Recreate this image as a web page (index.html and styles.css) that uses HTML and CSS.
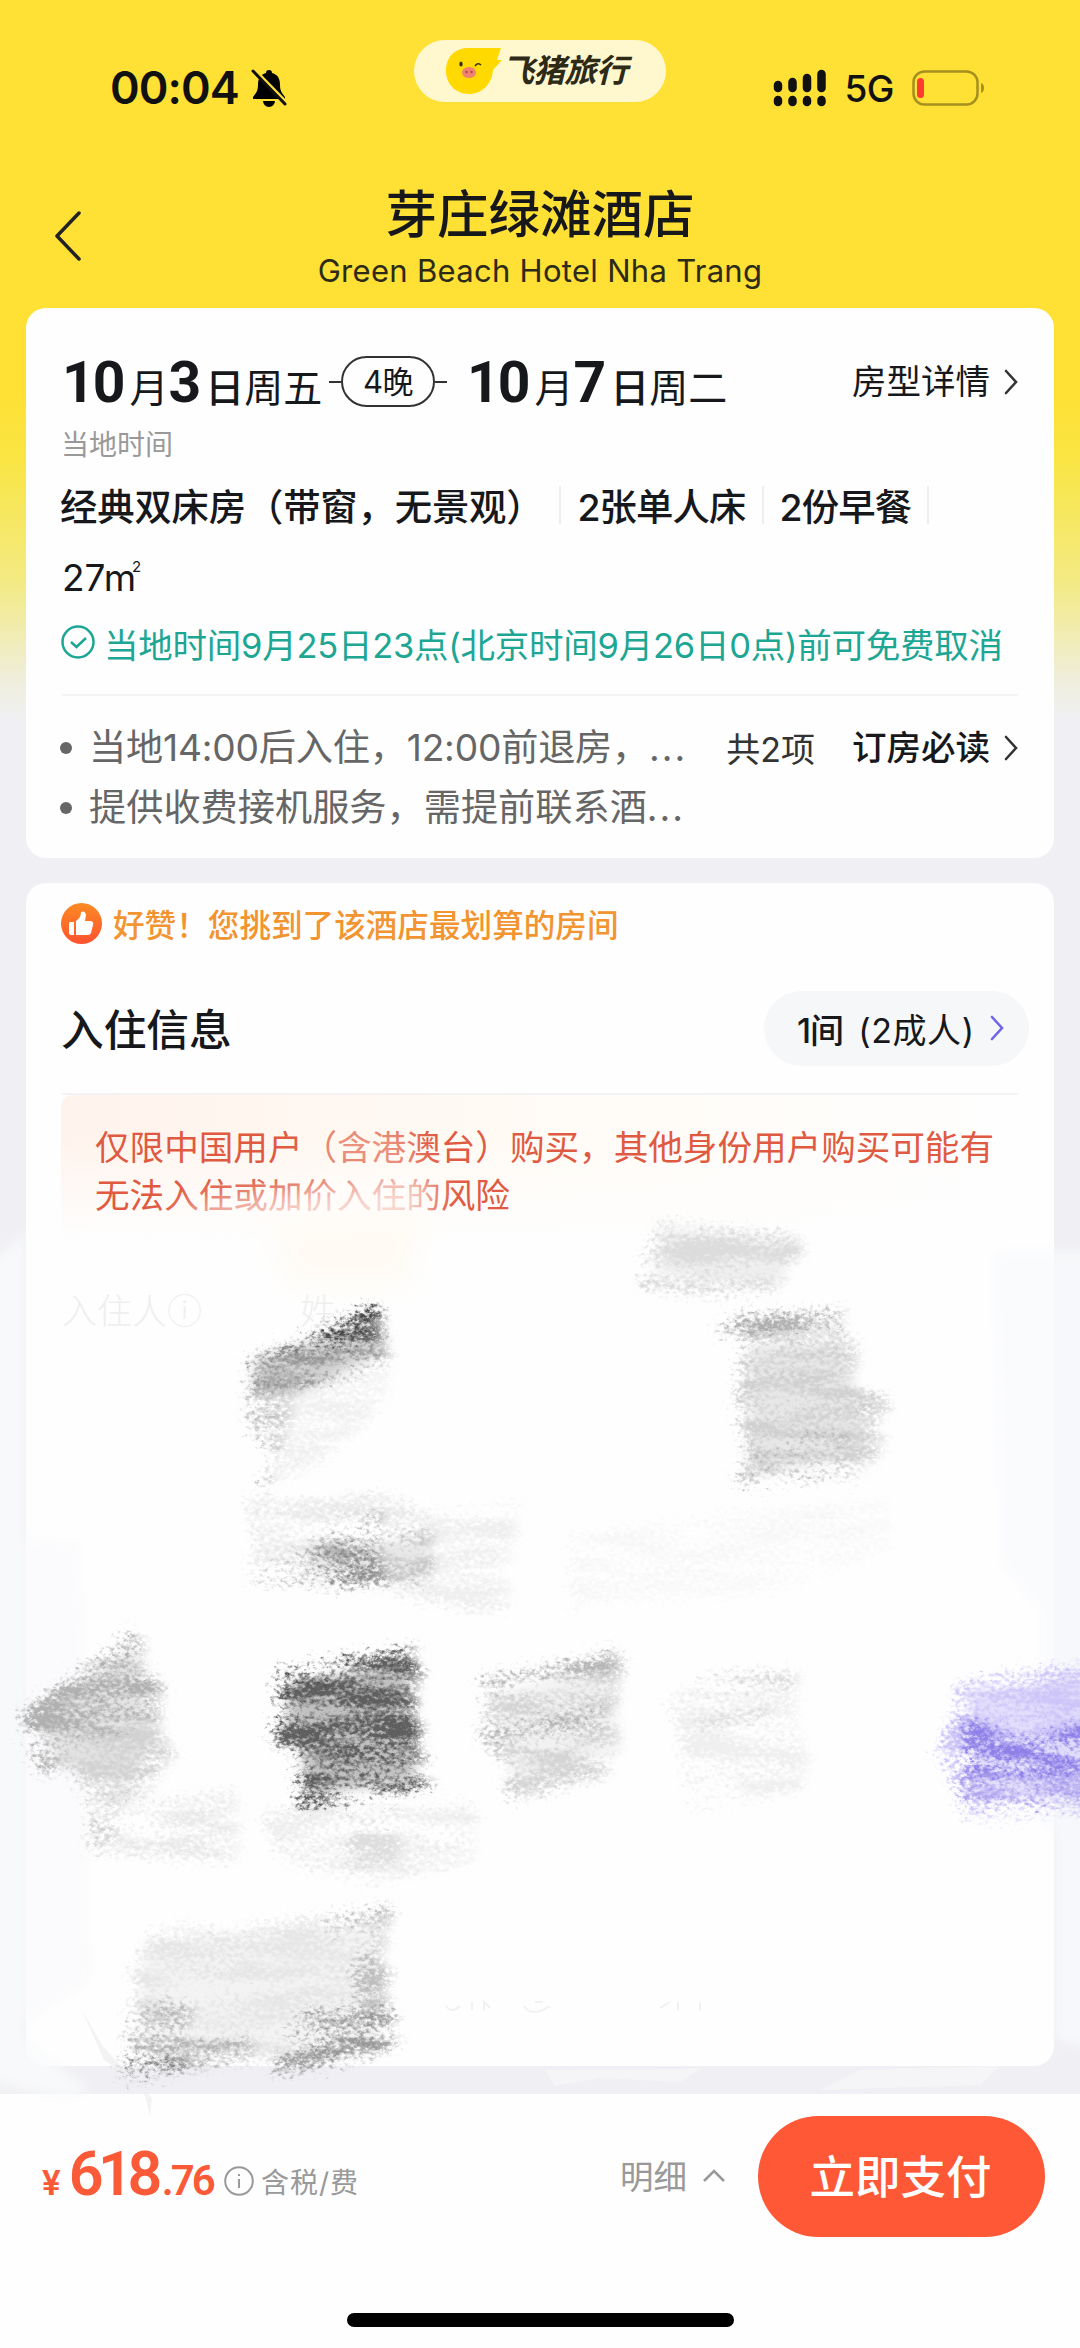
FILE: index.html
```html
<!DOCTYPE html>
<html lang="zh-CN">
<head>
    <meta charset="UTF-8">
    <meta name="viewport" content="width=device-width, initial-scale=1.0">
    <title>芽庄绿滩酒店 - 飞猪旅行</title>
    <link rel="stylesheet" href="styles.css">
</head>

<body>
    <div class="status-bar">
        <div class="status-left">
            <span class="time">00:04</span>
            <svg class="bell" viewBox="0 0 36 38">
                <path d="M18 1c-2 0-3 1.200-3 3-6 1.500-8 6-8 12 0 7-3 9-5 12v2h32v-2c-2-3-5-5-5-12 0-6-2-10.500-8-12 0-1.800-1-3-3-3zM12 32a6 6 0 0 0 12 0z" />
                <path d="M2 -1l34 35" stroke="#ffe034" stroke-width="3" />
                <path d="M2 2l32 33" stroke="#111" stroke-width="3" stroke-linecap="round" />
            </svg>
        </div>
        <div class="brand">
            <svg class="pig" viewBox="0 0 56 46">
                <path d="M22 0H55L51 12L56 12L47 22C46 36 36 46 23 46C9 46 0 35 0 23C0 9 9 0 22 0Z" fill="#ffd900" />
                <ellipse cx="23" cy="24.500" rx="7" ry="5.500" fill="#f08272" />
                <circle cx="20.500" cy="24" r="1.200" fill="#a94e4c" />
                <circle cx="25.500" cy="24" r="1.200" fill="#a94e4c" />
                <ellipse cx="15" cy="16" rx="1.700" ry="2.500" fill="#33301a" />
                <path d="M29 18q3-4 6-1" fill="none" stroke="#33301a" stroke-width="1.500" />
            </svg>
            <span>飞猪旅行</span>
        </div>
        <div class="status-right">
            <svg class="signal" viewBox="0 0 54 38">
                <g stroke="#111" stroke-width="8.500" stroke-linecap="round">
                    <path d="M5 16v3M19.500 13v6M34 9v10M48.500 5v14M5 31v2M19.500 31v2M34 31v2M48.500 31v2" />
                </g>
            </svg>
            <span class="network">5G</span>
            <svg class="battery" viewBox="0 0 74 36">
                <rect x="1.500" y="1.500" width="64" height="33" rx="11" fill="none" stroke="#a58f20" stroke-width="2.500" />
                <path d="M69 13c4 1 4 9 0 10z" fill="#a58f20" />
                <rect x="5" y="8" width="7" height="20" rx="3.500" fill="#ff3b30" />
            </svg>
        </div>
    </div>

    <div class="title-bar">
        <svg class="back" viewBox="0 0 28 52"><path d="M25 3L3 26L25 49" /></svg>
        <h1>芽庄绿滩酒店</h1>
        <p>Green Beach Hotel Nha Trang</p>
    </div>

    <div class="card room-card">
        <div class="dates">
            <div class="date"><b>10</b>月<b>3</b><em>日</em>周五</div>
            <span class="nights">4晚</span>
            <div class="date"><b>10</b>月<b>7</b><em>日</em>周二</div>
            <a class="more">房型详情<svg class="arrow" viewBox="0 0 14 26"><path d="M2 2L12 13L2 24" /></svg></a>
        </div>
        <div class="local">当地时间</div>
        <div class="room">
            <span>经典双床房（带窗，无景观）</span><i></i><span>2张单人床</span><i></i><span>2份早餐</span><i></i>
        </div>
        <div class="area">27m<sup>2</sup></div>
        <div class="cancel">
            <svg viewBox="0 0 34 34"><circle cx="17" cy="17" r="15.500" /><path d="M10 17l5.500 5L25 13" /></svg>
            <span>当地时间9月25日23点(北京时间9月26日0点)前可免费取消</span>
        </div>
        <div class="notes">
            <ul>
                <li>当地14:00后入住，12:00前退房，<span class="dots">...</span></li>
                <li>提供收费接机服务，需提前联系酒<span class="dots">...</span></li>
            </ul>
            <div class="read">
                <span>共2项</span>
                <a class="more">订房必读<svg class="arrow" viewBox="0 0 14 26"><path d="M2 2L12 13L2 24" /></svg></a>
            </div>
        </div>
    </div>

    <div class="card guest-card">
        <div class="praise">
            <svg viewBox="0 0 41 41">
                <defs>
                    <linearGradient id="thumb" x1="0" y1="0" x2="0" y2="1">
                        <stop offset="0" stop-color="#fb8b22" />
                        <stop offset="1" stop-color="#ff5230" />
                    </linearGradient>
                </defs>
                <circle cx="20.500" cy="20.500" r="20.500" fill="url(#thumb)" />
                <path d="M9 19h4v13h-3q-2 0-2-2v-9q0-2 1-2zM15 18q5-3 5-9 4-2 5 3l-1 6h6q3 1 2 4l-2 8q-1 2-3 2H15z" fill="#fff" />
            </svg>
            <span>好赞！您挑到了该酒店最划算的房间</span>
        </div>
        <div class="guest-head">
            <h2>入住信息</h2>
            <div class="rooms"><b>1间</b><span>(2成人)</span><svg class="arrow" viewBox="0 0 14 26"><path d="M2 2L12 13L2 24" /></svg></div>
        </div>
        <div class="warning">仅限中国用户（含港澳台）购买，其他身份用户购买可能有无法入住或加价入住的风险</div>
        <div class="guest-row"><span>入住人ⓘ</span><span>姓</span></div>
    </div>

    <!-- hand drawn strokes over the form -->
    <svg class="scribbles" viewBox="0 1090 1080 1030">
        <defs>
            <filter id="chalk" x="-10%" y="-10%" width="120%" height="120%">
                <feTurbulence type="fractalNoise" baseFrequency="0.2 0.26" numOctaves="4" seed="7" result="noise" />
                <feTurbulence type="fractalNoise" baseFrequency="0.012 0.05" numOctaves="2" seed="21" result="bands" />
                <feComposite in="noise" in2="bands" operator="arithmetic" k1="0" k2="0.6" k3="0.6" k4="0" result="mixed" />
                <feColorMatrix in="mixed" values="0 0 0 0 0  0 0 0 0 0  0 0 0 0 0  4.500 0 0 0 -1.750" result="grain" />
                <feGaussianBlur in="SourceGraphic" stdDeviation="4" result="smudge" />
                <feDisplacementMap in="smudge" in2="noise" scale="34" xChannelSelector="R" yChannelSelector="G" result="rough" />
                <feComposite in="rough" in2="grain" operator="in" result="strokes" />
                <feGaussianBlur in="strokes" stdDeviation="0.6" />
            </filter>
            <filter id="soft" x="-30%" y="-30%" width="160%" height="160%"><feGaussianBlur stdDeviation="14" /></filter>
            <filter id="edge"><feGaussianBlur stdDeviation="6" /></filter>
        </defs>

        <!-- erased areas -->
        <g filter="url(#soft)">
            <path d="M190 1206L400 1176L440 1180L425 1222L170 1226Z" fill="#fffdfb" opacity=".8" />
            <path d="M330 1120L410 1130L420 1165L300 1165Z" fill="#fff9f0" opacity=".4" />
            <path d="M270 1225L420 1215L410 1285L290 1285Z" fill="#fff8ec" opacity=".6" />
        </g>
        <g filter="url(#edge)" fill="#f9fafc">
            <path d="M-20 1270L26 1232V2040L90 2090L70 2100L-20 2080Z" opacity=".85" />
            <path d="M995 1252H1100V2050L1054 2040V1830L1040 1820V1610L1000 1560Z" opacity=".8" />
            <path d="M26 1540L80 1545L90 1980L26 2020Z" opacity=".7" />
        </g>
        <path d="M545 2070L700 2069L680 2082L600 2078L555 2086ZM820 2090L860 2070L1000 2066L980 2085Z" fill="#f8f8f9" opacity=".6" />

        <!-- pale smudge under the strokes -->
        <g filter="url(#edge)" opacity=".45">
            <path d="M255 1362L380 1318L385 1350L300 1395L255 1390Z" fill="#999" />
            <path d="M750 1345L845 1343L870 1455L750 1475Z" fill="#ccc" />
            <path d="M665 1230L795 1242L780 1285L655 1275Z" fill="#ddd" />
            <path d="M310 1545L430 1540L430 1578L310 1572Z" fill="#ccc" />
            <path d="M35 1715L135 1645L155 1740L130 1785L60 1765Z" fill="#c4c4c4" />
            <path d="M290 1685L408 1662L415 1780L305 1795L305 1745L285 1740Z" fill="#777" />
            <path d="M490 1695L610 1665L620 1750L515 1785Z" fill="#e2e2e2" />
            <path d="M970 1695L1090 1680V1795L975 1800Z" fill="#c2b8f8" />
            <path d="M145 1945L380 1925L380 2045L140 2060Z" fill="#e6e6e6" />
        </g>

        <g filter="url(#chalk)">
            <path d="M245 1366L374 1307L382 1316L377 1335L384 1345L320 1356L254 1368Z" fill="#444" />
            <path d="M250 1363L300 1348L388 1342L390 1364L320 1388L255 1390Z" fill="#999" />
            <path d="M248 1394L300 1382L325 1388L300 1420L298 1450L274 1452L252 1428Z" fill="#c4c4c4" />
            <path d="M300 1390L386 1362L392 1390L350 1440L290 1484L270 1492L263 1478L285 1450Z" fill="#f0f0f0" />
            <path d="M262 1478L276 1476L277 1490L267 1492Z" fill="#aaa" />

            <path d="M245 1498L380 1495L444 1515L436 1583L250 1576L258 1540Z" fill="#e9e9e9" />
            <path d="M300 1560L345 1523L386 1515L388 1581L347 1585L312 1580L250 1578Z" fill="#b5b5b5" />
            <path d="M318 1556L386 1541L386 1578L345 1583L318 1575Z" fill="#8e8e8e" />
            <path d="M388 1535L434 1530L436 1583L388 1581Z" fill="#c6c6c6" />
            <path d="M436 1512L522 1506L510 1575L513 1605L475 1611L380 1590L440 1580Z" fill="#efefef" />

            <path d="M662 1222L803 1236L802 1262L775 1292L700 1292L640 1286L648 1250Z" fill="#dcdcdc" />
            <path d="M742 1317L845 1312L846 1321L790 1330L738 1336L716 1332Z" fill="#aaa" />
            <path d="M745 1335L840 1333L862 1350L858 1386L890 1400L880 1460L742 1484L748 1450L738 1400Z" fill="#d0d0d0" />
            <path d="M750 1447L855 1436L850 1444L750 1456ZM738 1476L850 1464L868 1470L742 1485Z" fill="#adadad" />
            <path d="M572 1537L705 1520L890 1500L892 1546L770 1590L572 1605Z" fill="#f7f7f7" />

            <path d="M22 1714L138 1630L147 1645L145 1670L160 1680L165 1735L115 1752L75 1754L45 1776L30 1740Z" fill="#b0b0b0" />
            <path d="M70 1745L160 1716L176 1754L150 1790L120 1803L85 1800Z" fill="#d2d2d2" />
            <path d="M95 1812L238 1790L240 1862L92 1852L105 1830Z" fill="#e9e9e9" />
            <path d="M92 1812L125 1805L120 1840L92 1852Z" fill="#d0d0d0" />
            <path d="M262 1812L480 1806L476 1860L375 1882L282 1860Z" fill="#ededed" />
            <path d="M350 1815L402 1815L402 1860L350 1866Z" fill="#dedede" />

            <path d="M278 1680L360 1660L417 1648L420 1685L422 1738L425 1770L434 1774L428 1783L400 1794L298 1808L302 1788L297 1745L275 1744L282 1700Z" fill="#5e5e5e" />
            <path d="M278 1674L360 1658L355 1672L279 1688Z" fill="#4a4a4a" />

            <path d="M480 1686L570 1666L620 1652L622 1680L618 1700L622 1740L615 1762L600 1780L512 1800L500 1755L478 1737L490 1705Z" fill="#d4d4d4" />
            <path d="M482 1680L617 1652L615 1668L484 1696ZM485 1731L612 1706L610 1720L500 1742Z" fill="#b0b0b0" />
            <path d="M700 1680L802 1674L798 1715L812 1760L800 1790L692 1806L682 1740L668 1700Z" fill="#efefef" />
            <path d="M702 1680L800 1672L798 1682L702 1690ZM697 1720L780 1710L770 1717L700 1726Z" fill="#d0d0d0" />

            <path d="M960 1685L1090 1665V1810L968 1818L952 1770L938 1752L955 1720Z" fill="#cdc5f8" />
            <path d="M964 1720L1045 1738L1090 1720V1790L1030 1790L970 1780Z" fill="#8f80e8" />
            <path d="M960 1775L1090 1775V1800L1030 1808L962 1798Z" fill="#ada2ee" />

            <path d="M155 1930L245 1928L392 1910L384 1965L390 2045L130 2072L125 2030L140 1990L130 1975Z" fill="#e6e6e6" />
            <path d="M320 1924L392 1908L391 1924L335 1932ZM355 1960L385 1930L390 2000L360 2010Z" fill="#bdbdbd" />
            <path d="M140 2010L200 2000L190 2040L262 2040L250 2058L190 2068L122 2076L130 2040Z" fill="#b5b5b5" />
            <path d="M285 2030L315 2010L388 2010L404 2034L375 2055L275 2072L276 2058L320 2048Z" fill="#999" />
            <path d="M122 2060L190 2056L184 2070L126 2077Z" fill="#777" />
        </g>
        <path d="M82 2010L102 2045L126 2072L152 2098L150 2116L142 2085L104 2060Z" fill="#eee" opacity=".7" />
        <path d="M446 2006q6 8 14 0M472 2010v-8M484 2010v-8l6 6M524 2006q8 12 26 0M535 2002h8M660 2008l10-6M678 2010v-8M700 2010v-8" fill="none" stroke="#f1f1f1" stroke-width="2" />
    </svg>

    <div class="pay-bar">
        <div class="price"><small>¥</small><b>618</b><span>.76</span></div>
        <svg class="info" viewBox="0 0 30 30"><circle cx="15" cy="15" r="13.800" /><path d="M15 13v9M15 8v2" /></svg>
        <span class="tax">含税/费</span>
        <span class="detail">明细</span>
        <svg class="up" viewBox="0 0 24 14"><path d="M2 12L12 2L22 12" /></svg>
        <button>立即支付</button>
    </div>
    <div class="home-line"></div>
</body>
</html>
```

FILE: styles.css
```css
* {
    box-sizing: border-box;
}

body {
    margin: 0;
    width: 1080px;
    height: 2348px;
    position: relative;
    overflow: hidden;
    display: flex;
    flex-direction: column;
    font-family: Inter, "Noto Sans CJK SC", sans-serif;
    color: #17181b;
    background: linear-gradient(#ffe034 0, #ffe034 390px, #f9e544 460px, #f3ea82 580px, #efeedc 680px, #f0f0f4 720px);
}

h1, h2, p, ul {
    margin: 0;
    padding: 0;
    font-weight: 500;
}

svg {
    display: block;
    flex: none;
}

.status-bar {
    height: 160px;
    padding: 40px 94px 0 110px;
    display: grid;
    grid-template-columns: 304px 252px 1fr;
}

.status-left, .status-right {
    display: flex;
    align-items: center;
    height: 95px;
    color: #111;
}

.time {
    font-size: 45px;
    font-weight: 600;
    letter-spacing: -0.9px;
}

.bell {
    width: 36px;
    height: 38px;
    margin-left: 12px;
}

.brand {
    height: 62px;
    border-radius: 31px;
    background: #fff8cf;
    display: flex;
    align-items: center;
    padding-left: 32px;
}

.brand span {
    margin-left: 0;
    font-size: 32px;
    font-weight: 700;
    font-style: italic;
    letter-spacing: -0.7px;
    line-height: 62px;
    color: #2d2a17;
    white-space: nowrap;
}

.pig {
    width: 56px;
    height: 46px;
}

.status-right {
    justify-content: flex-end;
}

.signal {
    width: 54px;
    height: 38px;
}

.network {
    font-size: 37px;
    font-weight: 500;
    margin: 0 18px 0 17px;
    padding-top: 2px;
    letter-spacing: -0.5px;
}

.battery {
    width: 74px;
    height: 36px;
}

.title-bar {
    position: relative;
    height: 148px;
    padding-top: 25px;
    text-align: center;
}

.title-bar h1 {
    font-size: 51.500px;
    line-height: 58px;
}

.title-bar p {
    font-size: 31px;
    line-height: 38px;
    margin-top: 9px;
    font-weight: 400;
    letter-spacing: 0.3px;
    color: #2d2a17;
}

.back {
    position: absolute;
    left: 54px;
    top: 50px;
    width: 28px;
    height: 52px;
}

.back path {
    fill: none;
    stroke: #222;
    stroke-width: 3.500;
    stroke-linecap: round;
    stroke-linejoin: round;
}

.card {
    margin: 0 26px;
    padding: 0 36px;
    background: #fefefe;
    border-radius: 20px;
}

.room-card {
    height: 550px;
    padding-top: 44px;
}

.dates {
    display: flex;
    height: 60px;
    white-space: nowrap;
}

.date {
    font-size: 39px;
    line-height: 72px;
    font-weight: 400;
    width: 264px;
}

.date b {
    font-family: Roboto, sans-serif;
    font-size: 57px;
    line-height: 60px;
    font-weight: 700;
    letter-spacing: -2px;
    margin-right: 6px;
}

.date em {
    font-style: normal;
    font-weight: 500;
}

.nights {
    position: relative;
    width: 94px;
    height: 51px;
    margin: 4px 32px 0 15px;
    border: 2px solid #333;
    border-radius: 26px;
    font-size: 31px;
    line-height: 47px;
    letter-spacing: -0.5px;
    text-align: center;
}

.nights::before, .nights::after {
    content: "";
    position: absolute;
    top: 23px;
    width: 12px;
    height: 2px;
    background: #333;
}

.nights::before {
    left: -14px;
}

.nights::after {
    right: -14px;
}

.more {
    display: flex;
    align-items: center;
    font-size: 34.500px;
    line-height: 56px;
}

.dates .more {
    margin-left: auto;
    height: 60px;
}

.arrow {
    width: 14px;
    height: 26px;
    margin-left: 14px;
}

.arrow path {
    fill: none;
    stroke: #333;
    stroke-width: 2.600;
    stroke-linecap: round;
}

.local {
    font-size: 28px;
    line-height: 36px;
    margin: 15px 0 0 -1px;
    color: #999;
}

.room {
    display: flex;
    align-items: center;
    height: 56px;
    margin: 14px 0 0 -2px;
    font-size: 37.400px;
    font-weight: 500;
    white-space: nowrap;
}

.room span {
    letter-spacing: -0.2px;
}

.room span + i + span {
    letter-spacing: -0.9px;
}

.room i {
    width: 2px;
    height: 38px;
    background: #eeeef0;
    margin: 0 16px;
}

.area {
    font-size: 37px;
    line-height: 56px;
    margin-top: 17px;
}

.area sup {
    font-size: 15px;
    line-height: 0;
    vertical-align: 19px;
    margin-left: -4px;
}

.cancel {
    display: flex;
    align-items: center;
    height: 76px;
    gap: 9px;
    margin-left: -1px;
    color: #1ca693;
    font-size: 34.500px;
    letter-spacing: -0.25px;
    white-space: nowrap;
}

.cancel span {
    margin-top: -2px;
}

.cancel svg {
    width: 34px;
    height: 34px;
    margin-top: -4px;
}

.cancel path, .cancel circle {
    fill: none;
    stroke: #1ca693;
    stroke-width: 2.500;
}

.notes {
    display: flex;
    justify-content: space-between;
    margin-top: 12px;
    padding-top: 22px;
    border-top: 2px solid #f3f3f5;
}

.notes ul {
    list-style: none;
    font-size: 37.200px;
    line-height: 60px;
    color: #666;
    white-space: nowrap;
}

.notes li {
    display: flex;
    align-items: center;
    font-weight: 400;
}

.notes li::before {
    content: "";
    width: 12px;
    height: 12px;
    border-radius: 6px;
    background: #666;
    margin: 0 17px 0 -2px;
}

.dots {
    letter-spacing: 2px;
}

.notes li:first-child {
    letter-spacing: -0.2px;
}

.read {
    display: flex;
    gap: 37px;
    height: 60px;
    align-items: center;
    font-size: 34px;
    color: #333;
}

.read span {
    margin-top: -2px;
}

.read .more {
    font-weight: 500;
    color: #17181b;
}

.guest-card {
    height: 1183px;
    margin-top: 25px;
}

.praise {
    display: flex;
    align-items: center;
    height: 80px;
    gap: 11px;
    margin-left: -1px;
    font-size: 31.600px;
    font-weight: 500;
    color: #f29430;
}

.praise svg {
    width: 41px;
    height: 41px;
}

.guest-head {
    display: flex;
    align-items: center;
    justify-content: space-between;
    height: 132px;
    border-bottom: 2px solid #f3f3f5;
}

.guest-head h2 {
    font-size: 42.700px;
    margin: -3px 0 0 -1px;
}

.rooms {
    display: flex;
    align-items: center;
    height: 75px;
    width: 265px;
    margin-right: -11px;
    padding-left: 33px;
    border-radius: 38px;
    background: #f6f7f9;
    font-size: 34px;
    white-space: nowrap;
}

.rooms b {
    font-weight: 500;
    letter-spacing: -1px;
}

.rooms span {
    margin-left: 15px;
    letter-spacing: 0.6px;
}

.rooms .arrow {
    margin-left: 15px;
}

.rooms .arrow path {
    stroke: #7065e8;
}

.warning {
    height: 145px;
    padding: 28px 20px 0 34px;
    margin-left: -1px;
    border-radius: 12px;
    font-size: 34.600px;
    line-height: 48px;
    color: #e05a41;
    background: linear-gradient(to bottom, rgba(254, 254, 254, 0) 30%, #fefefe), linear-gradient(to right, #fff3ec, #fffaf4 45%, #fefefe);
}

.guest-row {
    display: flex;
    gap: 98px;
    margin-top: 41px;
    font-size: 35px;
    line-height: 60px;
    color: #efeff0;
    font-weight: 300;
}

.scribbles {
    position: absolute;
    left: 0;
    top: 1090px;
    width: 1080px;
    height: 1030px;
}

.pay-bar {
    display: flex;
    align-items: center;
    height: 164px;
    margin-top: 28px;
    padding: 0 35px 0 42px;
    background: #fefefe;
    color: #999;
}

.price {
    font-family: Roboto, sans-serif;
    color: #fa5a38;
    width: 182px;
    margin-top: -5px;
    white-space: nowrap;
}

.price small {
    font-size: 35px;
    font-weight: 600;
    margin-right: 8px;
}

.price b {
    font-size: 61px;
    font-weight: 600;
    letter-spacing: -5.500px;
}

.price span {
    font-size: 42px;
    font-weight: 600;
    letter-spacing: -3px;
    margin-left: 5px;
}

.info {
    width: 30px;
    height: 30px;
    margin-top: 9px;
}

.info path, .info circle, .up path {
    fill: none;
    stroke: #999;
    stroke-width: 2;
}

.tax {
    font-size: 28px;
    letter-spacing: 1px;
    margin: 9px 0 0 7px;
}

.detail {
    font-size: 33.500px;
    margin: -3px 0 0 auto;
}

.up {
    width: 24px;
    height: 14px;
    margin: 0 32px 0 15px;
}

.up path {
    stroke-width: 2.600;
}

.pay-bar button {
    width: 287px;
    height: 121px;
    padding: 0 6px 5px 4px;
    border: none;
    border-radius: 61px;
    background: #ff5836;
    color: #fff;
    font-family: inherit;
    font-size: 45.500px;
    font-weight: 500;
}

.home-line {
    flex: 1;
    background: #fefefe;
}

.home-line::after {
    content: "";
    display: block;
    width: 387px;
    height: 14px;
    margin: 55px auto 0;
    border-radius: 7px;
    background: #000;
}
```
